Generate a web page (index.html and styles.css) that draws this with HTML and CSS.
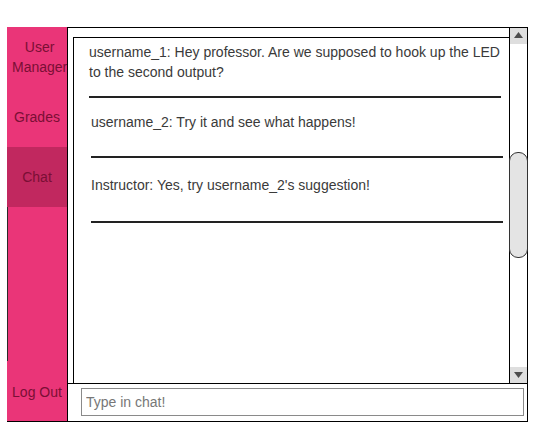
FILE: index.html
```html
<!DOCTYPE html>
<html lang="en">
<head>
<meta charset="utf-8">
<title>Chat</title>
<link rel="stylesheet" href="styles.css">
</head>
<body>
<div class="app">
  <nav class="sidebar">
    <div class="nav-item nav-item--wide">User Manager</div>
    <div class="nav-item">Grades</div>
    <div class="nav-item nav-item--active">Chat</div>
    <div class="nav-fill"></div>
    <div class="nav-item nav-item--bottom">Log Out</div>
  </nav>
  <main class="main">
    <div class="chat-row">
      <div class="chat-box">
        <div class="msg msg--first">username_1: Hey professor. Are we supposed to hook up the LED to the second output?</div>
        <div class="msg msg--second">username_2: Try it and see what happens!</div>
        <div class="msg msg--third">Instructor: Yes, try username_2's suggestion!</div>
      </div>
      <div class="scrollbar">
        <div class="sb-btn">
          <svg width="17" height="16" viewBox="0 0 17 16"><polygon points="4,10 13,10 8.5,4" fill="#4d4d4d"/></svg>
        </div>
        <div class="sb-thumb"></div>
        <div class="sb-track"></div>
        <div class="sb-btn">
          <svg width="17" height="16" viewBox="0 0 17 16"><polygon points="4,5 13,5 8.5,11" fill="#4d4d4d"/></svg>
        </div>
      </div>
    </div>
    <input class="chat-input" type="text" placeholder="Type in chat!">
  </main>
</div>
</body>
</html>
```
FILE: styles.css
```css
* { box-sizing: border-box; }
html, body { margin: 0; padding: 0; background: #fff; }
body { font-family: "Liberation Sans", Arial, sans-serif; font-size: 14px; }

.app {
  display: flex;
  margin: 27px 0 0 7px;
  width: 521px;
  height: 395px;
  border-bottom: 1px solid #000;
}

.sidebar {
  width: 60px;
  flex: none;
  display: flex;
  flex-direction: column;
  background: #ea3578;
}
.nav-item {
  height: 60px;
  flex: none;
  display: flex;
  align-items: center;
  justify-content: center;
  text-align: center;
  line-height: 20px;
  color: #7a0f35;
  white-space: normal;
}
.nav-item--wide {
  justify-content: flex-start;
  padding: 0 10px 0 5px;
}
.nav-item--active { background: #c1285f; }
.nav-item--bottom { padding-top: 2px; }
.nav-fill { flex: 1; border-left: 1px solid #2a2a2a; }

.main {
  flex: 1;
  display: flex;
  flex-direction: column;
  border: 1px solid #000;
  border-bottom: none;
  background: #fff;
}

.chat-row {
  height: 356px;
  flex: none;
  display: flex;
  border-bottom: 1px solid #000;
}
.chat-box {
  flex: 1;
  margin: 9px 0 0 5px;
  border-left: 1px solid #000;
  border-top: 1px solid #000;
  overflow: hidden;
}
.msg {
  line-height: 20px;
  color: #3a3a3a;
  border-bottom: 2px solid #222;
}
.msg--first { margin: 4px 8px 0 15px; padding-bottom: 14px; }
.msg--second { margin: 14px 6px 0 17px; padding-bottom: 24px; }
.msg--third { margin: 17px 6px 0 17px; padding-bottom: 26px; }

.scrollbar {
  width: 18px;
  flex: none;
  display: flex;
  flex-direction: column;
  border-left: 1px solid #000;
}
.sb-btn {
  height: 16px;
  flex: none;
  background: #dedede;
}
.sb-btn svg { display: block; }
.sb-thumb {
  flex: none;
  height: 106px;
  margin: 108px -1px 0;
  border: 1px solid #333;
  border-radius: 9px;
  background: #e4e4e4;
}
.sb-track { flex: 1; }

.chat-input {
  display: block;
  margin: 4px 3px 0 13px;
  height: 28px;
  border: 1px solid #8a8a8a;
  border-radius: 0;
  padding: 0 4px;
  font-family: "Liberation Sans", Arial, sans-serif;
  font-size: 14px;
  color: #333;
  outline: none;
}
.chat-input::placeholder { color: #777; }
```
